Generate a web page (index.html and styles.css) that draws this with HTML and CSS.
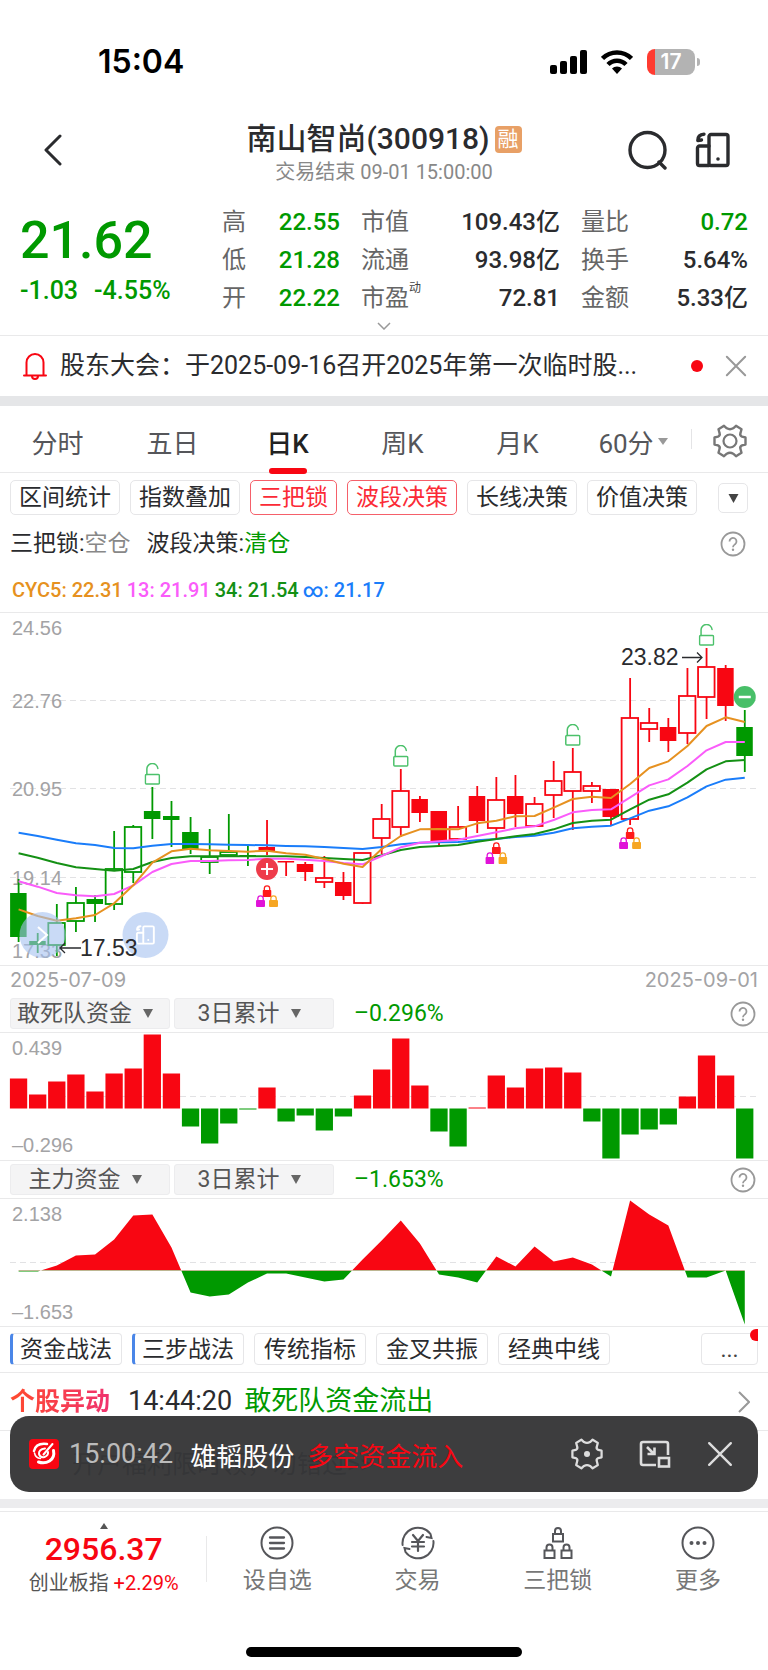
FILE: index.html
```
<!DOCTYPE html>
<html lang="zh-CN">
<head>
  <meta charset="UTF-8" />
  <meta name="viewport" content="width=device-width, initial-scale=1.0"/>
  <title>南山智尚(300918)</title>
  <link rel="stylesheet" href="styles.css">
</head>
<body>

<!-- shared icons -->
<svg class="defs" width="0" height="0" aria-hidden="true">
  <symbol id="i-help" viewBox="0 0 26 26">
    <circle cx="13" cy="13" r="11.5" fill="none" stroke="currentColor" stroke-width="1.8"/>
    <path d="M9.5 10.4a3.5 3.5 0 1 1 5.6 2.8c-1.3 1-2.1 1.5-2.1 3" fill="none" stroke="currentColor" stroke-width="1.8"/>
    <circle cx="13" cy="18.8" r="1.2" fill="currentColor"/>
  </symbol>
  <symbol id="i-close" viewBox="0 0 24 24">
    <path d="M2 2l20 20M22 2L2 22" fill="none" stroke="currentColor" stroke-width="2.2" stroke-linecap="round"/>
  </symbol>
  <symbol id="i-tri" viewBox="0 0 10 9">
    <path d="M0 0h10L5 9z" fill="currentColor"/>
  </symbol>
  <symbol id="i-gear" viewBox="0 0 34 34">
    <path d="M1.5 13.5L5 12.7Q7.5 11.5 6.5 9L5.5 5.2L11 1.8L13.8 4.3Q17 6.2 20.2 4.3L23 1.8L28.5 5.2L27.5 9Q26.5 11.5 29 12.7L32.5 13.5V20.5L29 21.3Q26.5 22.5 27.5 25L28.5 28.8L23 32.2L20.2 29.7Q17 27.8 13.8 29.7L11 32.2L5.5 28.8L6.5 25Q7.5 22.5 5 21.3L1.5 20.5z" fill="none" stroke="currentColor" stroke-width="2.4" stroke-linejoin="round"/>
  </symbol>
  <symbol id="i-phone" viewBox="0 0 36 36">
    <g fill="none" stroke="currentColor" stroke-width="3.4" stroke-linejoin="round" stroke-linecap="round">
      <rect x="14" y="2.5" width="19" height="31" rx="2"/>
      <path d="M14 14H4.5a2 2 0 0 0-2 2v15.500a2 2 0 0 0 2 2H14"/>
      <path d="M9 2.200Q2.800 2.500 2.800 8.500L6.500 8"/>
    </g>
    <circle cx="23" cy="27" r="1.800" fill="currentColor"/>
  </symbol>
  <symbol id="i-unlock" viewBox="0 0 16 22">
    <g fill="none" stroke="#4cc16b" stroke-width="1.5">
      <rect x="1" y="11.500" width="14" height="9.500" rx="1"/>
      <path d="M2.500 11.500V6.500a5.500 5.500 0 0 1 11-1" stroke-linecap="round"/>
    </g>
  </symbol>
  <symbol id="i-lock" viewBox="0 0 9 12">
    <path d="M1.800 6V3.500a2.700 2.700 0 0 1 5.400 0V6" fill="none" stroke="currentColor" stroke-width="1.300"/>
    <rect x="0" y="5" width="9" height="7" rx="1" fill="currentColor"/>
  </symbol>
</svg>

<div class="status-bar">
  <span class="clock">15:04</span>
  <div class="status-icons">
    <svg width="37" height="24" viewBox="0 0 37 24">
      <rect x="0" y="15" width="7" height="9" rx="2"/>
      <rect x="10" y="11" width="7" height="13" rx="2"/>
      <rect x="20" y="6" width="7" height="18" rx="2"/>
      <rect x="30" y="0" width="7" height="24" rx="2"/>
    </svg>
    <svg width="32" height="24" viewBox="0 0 32 24">
      <g fill="none" stroke="#000" stroke-width="4.500">
        <path d="M1.500 8.500a20.500 20.500 0 0 1 29 0"/>
        <path d="M7 14.500a12.500 12.500 0 0 1 18 0"/>
      </g>
      <path d="M16 24l-5-5.500a7 7 0 0 1 10 0z"/>
    </svg>
    <span class="battery">17</span>
  </div>
</div>

<header class="header">
  <button class="icon-btn back" aria-label="返回">
    <svg width="20" height="32" viewBox="0 0 20 32"><path d="M17 2L3 16l14 14" fill="none" stroke="currentColor" stroke-width="3" stroke-linecap="round" stroke-linejoin="round"/></svg>
  </button>
  <div class="heading">
    <h1>南山智尚(300918)<span class="margin-tag">融</span></h1>
    <p>交易结束 09-01 15:00:00</p>
  </div>
  <div class="header-actions">
    <button class="icon-btn" aria-label="搜索">
      <svg width="40" height="40" viewBox="0 0 40 40"><g fill="none" stroke="currentColor" stroke-width="3.400"><circle cx="19.500" cy="20" r="17.500"/><path d="M31 32l6 6" stroke-linecap="round"/></g></svg>
    </button>
    <button class="icon-btn" aria-label="小窗">
      <svg width="36" height="36"><use href="#i-phone"/></svg>
    </button>
  </div>
</header>

<section class="quote">
  <div class="quote-body">
    <div class="price">
      <strong>21.62</strong>
      <p><span>-1.03</span><span>-4.55%</span></p>
    </div>
    <dl class="stats">
      <div><dt>高</dt><dd class="down">22.55</dd></div>
      <div><dt>市值</dt><dd>109.43亿</dd></div>
      <div><dt>量比</dt><dd class="down">0.72</dd></div>
      <div><dt>低</dt><dd class="down">21.28</dd></div>
      <div><dt>流通</dt><dd>93.98亿</dd></div>
      <div><dt>换手</dt><dd>5.64%</dd></div>
      <div><dt>开</dt><dd class="down">22.22</dd></div>
      <div><dt>市盈<sup>动</sup></dt><dd>72.81</dd></div>
      <div><dt>金额</dt><dd>5.33亿</dd></div>
    </dl>
  </div>
  <button class="icon-btn expand" aria-label="展开">
    <svg width="14" height="8" viewBox="0 0 14 8"><path d="M1 1l6 6 6-6" fill="none" stroke="currentColor" stroke-width="1.500"/></svg>
  </button>
</section>

<div class="notice">
  <svg class="bell" width="24" height="28" viewBox="0 0 24 28">
    <g fill="none" stroke="currentColor" stroke-width="2" stroke-linecap="round">
      <path d="M3.500 23V10.500a8.500 8.500 0 0 1 17 0V23"/>
      <path d="M1 23.500h22M9 24a3 3 0 0 0 6 0"/>
    </g>
  </svg>
  <a href="#">股东大会：于2025-09-16召开2025年第一次临时股...</a>
  <i class="dot"></i>
  <button class="icon-btn" aria-label="关闭"><svg width="22" height="22"><use href="#i-close"/></svg></button>
</div>

<nav class="tabs">
  <button>分时</button>
  <button>五日</button>
  <button class="active">日K</button>
  <button>周K</button>
  <button>月K</button>
  <button>60分<svg width="10" height="7" viewBox="0 0 10 9" preserveAspectRatio="none"><path d="M0 0h10L5 9z" fill="#999"/></svg></button>
  <button class="settings" aria-label="设置">
    <svg width="34" height="34"><use href="#i-gear"/><circle cx="17" cy="17" r="6.500" fill="none" stroke="currentColor" stroke-width="2.200"/></svg>
  </button>
</nav>

<div class="chips">
  <button class="chip">区间统计</button>
  <button class="chip">指数叠加</button>
  <button class="chip on">三把锁</button>
  <button class="chip on">波段决策</button>
  <button class="chip">长线决策</button>
  <button class="chip">价值决策</button>
  <button class="chip more" aria-label="更多指标"><svg width="11" height="9"><use href="#i-tri"/></svg></button>
</div>

<div class="signal">
  <span>三把锁:<span class="muted">空仓</span></span>
  <span>波段决策:<span class="down">清仓</span></span>
  <button class="icon-btn help" aria-label="说明"><svg width="26" height="26"><use href="#i-help"/></svg></button>
</div>

<div class="legend">
  <span class="cyc5">CYC5: 22.31</span>
  <span class="cyc13">13: 21.91</span>
  <span class="cyc34">34: 21.54</span>
  <span class="cycinf">∞: 21.17</span>
</div>

<div class="chart kline">
  <svg id="kline" viewBox="0 1 768 352"></svg>
</div>
<div class="dates"><span>2025-07-09</span><span>2025-09-01</span></div>

<div class="indicator">
  <label class="picker"><select aria-label="指标"><option>敢死队资金</option></select><svg width="10" height="9"><use href="#i-tri"/></svg></label>
  <label class="picker"><select aria-label="周期"><option>3日累计</option></select><svg width="10" height="9"><use href="#i-tri"/></svg></label>
  <span class="down">–0.296%</span>
  <button class="icon-btn help" aria-label="说明"><svg width="26" height="26"><use href="#i-help"/></svg></button>
</div>
<div class="chart">
  <svg id="bars" viewBox="0 1 768 127"></svg>
</div>

<div class="indicator">
  <label class="picker"><select aria-label="指标"><option>主力资金</option></select><svg width="10" height="9"><use href="#i-tri"/></svg></label>
  <label class="picker"><select aria-label="周期"><option>3日累计</option></select><svg width="10" height="9"><use href="#i-tri"/></svg></label>
  <span class="down">–1.653%</span>
  <button class="icon-btn help" aria-label="说明"><svg width="26" height="26"><use href="#i-help"/></svg></button>
</div>
<div class="chart">
  <svg id="area" viewBox="0 0 768 127"></svg>
</div>

<div class="chips tactics">
  <button class="chip mark">资金战法</button>
  <button class="chip mark">三步战法</button>
  <button class="chip">传统指标</button>
  <button class="chip">金叉共振</button>
  <button class="chip">经典中线</button>
  <button class="chip more">...</button>
</div>

<div class="feed">
  <a class="event" href="#">
    <b>个股异动</b>
    <span class="time">14:44:20</span>
    <span class="down">敢死队资金流出</span>
    <svg width="12" height="22" viewBox="0 0 12 22"><path d="M1 1l10 10L1 21" fill="none" stroke="#999" stroke-width="2"/></svg>
  </a>
  <a class="promo" href="#">开户福利限时领，勿错过&gt;&gt;</a>

  <div class="toast">
    <svg class="logo" width="30" height="30" viewBox="0 0 30 30">
      <rect width="30" height="30" rx="4" fill="#f80612"/>
      <g fill="none" stroke="#fff" stroke-linecap="round">
        <path d="M18 5Q7 3.500 5 12" stroke-width="2.500"/>
        <path d="M5.500 14q1 5 6 5.500" stroke-width="1.500"/>
        <path d="M16 9.500q-6.500 1-6 5.500 1 4 5.500 3 4-1.500 3.500-5" stroke-width="2"/>
        <path d="M24.500 11.500q1.500 7-4 10.500-5 3-11 1" stroke-width="3"/>
        <path d="M23.500 5L14.500 15.500" stroke-width="2"/>
      </g>
    </svg>
    <span class="time">15:00:42</span>
    <span class="name">雄韬股份</span>
    <span class="up">多空资金流入</span>
    <div class="toast-actions">
      <button class="icon-btn" aria-label="设置"><svg width="32" height="32" viewBox="0 0 34 34"><use href="#i-gear"/><circle cx="17" cy="17" r="3.200" fill="currentColor"/></svg></button>
      <button class="icon-btn" aria-label="悬浮窗">
        <svg width="32" height="28" viewBox="0 0 32 28"><g fill="none" stroke="currentColor" stroke-width="2.600"><path d="M17 25H4a2 2 0 0 1-2-2V4a2 2 0 0 1 2-2h23a2 2 0 0 1 2 2v11"/><rect x="20" y="18" width="10" height="8.500"/><path d="M8 7l7 7M15.500 7.500V14H8.500"/></g></svg>
      </button>
      <button class="icon-btn" aria-label="关闭"><svg width="26" height="26"><use href="#i-close"/></svg></button>
    </div>
  </div>
</div>

<footer class="bottom-nav">
  <a class="index" href="#">
    <svg width="8" height="6" viewBox="0 0 8 6"><path d="M0 6h8L4 0z" fill="#555"/></svg>
    <strong>2956.37</strong>
    <span>创业板指 <span class="up">+2.29%</span></span>
  </a>
  <a href="#">
    <svg width="34" height="34" viewBox="0 0 34 34"><g fill="none" stroke="currentColor" stroke-width="2"><circle cx="17" cy="17" r="15.500"/><path d="M10 11.500h14M10 17h14M10 22.500h14" stroke-width="2.300" stroke-linecap="round"/></g></svg>
    设自选
  </a>
  <a href="#">
    <svg width="34" height="34" viewBox="0 0 34 34"><g fill="none" stroke="currentColor" stroke-width="2" stroke-linecap="round"><path d="M1.600 19A15.500 15.500 0 0 1 29.500 8M29.500 8l1 4-5-1"/><path d="M32.400 15A15.500 15.500 0 0 1 4.500 26M4.500 26l-1-4 5 1"/><path d="M12 9l5 6 5-6M17 15v10M11 16h12M11 20.500h12" stroke-width="2.200"/></g></svg>
    交易
  </a>
  <a href="#">
    <svg width="34" height="34" viewBox="0 0 34 34"><g fill="none" stroke="currentColor" stroke-width="2"><rect x="12" y="8" width="10" height="7.500"/><path d="M14 8V5q0-3 3-3t3 3v3"/><rect x="3.500" y="24.500" width="10" height="7.500"/><path d="M5.500 24.500v-3q0-3 3-3t3 3v3"/><rect x="20.500" y="24.500" width="10" height="7.500"/><path d="M22.500 24.500v-3q0-3 3-3t3 3v3"/></g></svg>
    三把锁
  </a>
  <a href="#">
    <svg width="34" height="34" viewBox="0 0 34 34"><circle cx="17" cy="17" r="15.500" fill="none" stroke="currentColor" stroke-width="2"/><g fill="currentColor"><circle cx="10.500" cy="17" r="2"/><circle cx="17" cy="17" r="2"/><circle cx="23.500" cy="17" r="2"/></g></svg>
    更多
  </a>
</footer>
<div class="home-indicator"></div>

<script src="charts.js"></script>
</body>
</html>
```
FILE: styles.css
```
* { box-sizing: border-box; }
body {
  margin: 0;
  font-family: Roboto, "Noto Sans CJK SC", sans-serif;
  background: #fff;
  color: #2a2b2e;
}
a { color: inherit; text-decoration: none; }
button { font: inherit; color: inherit; background: none; border: none; padding: 0; cursor: pointer; }
svg { display: block; flex: none; }
.defs { position: absolute; }
.up { color: #f80612; }
.down { color: #090; }
.muted { color: #888; }
.icon-btn { display: flex; flex: none; }

/* status bar */
.status-bar {
  display: flex;
  justify-content: space-between;
  align-items: center;
  padding: 42px 73px 24px 98px;
  line-height: 40px;
  color: #000;
}
.clock { font-family: Inter, sans-serif; font-weight: 600; font-size: 32px; }
.status-icons { display: flex; align-items: center; gap: 14px; }
.battery {
  width: 48px;
  height: 26px;
  border-radius: 8px;
  background: linear-gradient(to right, #ff3b30 8px, #b3b3b3 8px);
  color: #fff;
  font: 600 21px/26px Inter, sans-serif;
  text-align: center;
  position: relative;
}
.battery::after {
  content: "";
  position: absolute;
  right: -5px;
  top: 9px;
  width: 3px;
  height: 8px;
  border-radius: 0 3px 3px 0;
  background: #b3b3b3;
}

/* header */
.header {
  display: grid;
  grid-template-columns: 1fr auto 1fr;
  align-items: center;
  padding: 15px 37px 6px;
}
.header .icon-btn { padding-bottom: 5px; }
.back { padding-left: 6px; }
.heading { text-align: center; }
h1 {
  display: flex;
  align-items: center;
  gap: 5px;
  margin: 0 0 3px;
  font-size: 30px;
  line-height: 36px;
  font-weight: 500;
}
.margin-tag {
  width: 27px;
  border-radius: 4px;
  background: #e8a066;
  color: #fff;
  font-size: 21px;
  line-height: 27px;
  font-weight: 400;
  text-align: center;
}
.heading p { margin: 0; font-size: 20px; line-height: 24px; color: #888; }
.header-actions { display: flex; align-items: center; justify-content: flex-end; gap: 27px; }

/* quote */
.quote { padding-top: 13px; border-bottom: 1px solid #e9e9ea; }
.quote-body { display: flex; padding: 0 20px; }
.price { width: 202px; padding-top: 10px; color: #090; }
.price strong { display: block; font-size: 52px; line-height: 56px; font-weight: 500; }
.price p { display: flex; gap: 16px; margin: 7px 0 0; font-size: 25px; line-height: 30px; font-weight: 500; }
.stats {
  flex: 1;
  display: grid;
  grid-template-columns: 118fr 199fr 167fr;
  column-gap: 21px;
  margin: 0;
  font-size: 24px;
  line-height: 38px;
}
.stats div { display: flex; justify-content: space-between; height: 38px; }
.stats dt { color: #666; }
.stats dd { margin: 0; font-weight: 500; }
.stats sup { font-size: 12px; line-height: 12px; color: #444; vertical-align: 14px; }
.expand { width: 100%; height: 18px; justify-content: center; align-items: center; color: #999; }

/* notice */
.notice {
  display: flex;
  align-items: center;
  padding: 0 21px 0 23px;
  border-bottom: 10px solid #e5e6e8;
  font-size: 25px;
  line-height: 60px;
}
.notice a { margin: 0 auto 0 13px; white-space: nowrap; }
.notice .icon-btn { color: #999; }
.bell { color: #f80612; }
.dot { width: 12px; height: 12px; margin-right: 22px; border-radius: 50%; background: #f80612; }

/* period tabs */
.tabs {
  display: grid;
  grid-template-columns: repeat(5, 115fr) 116fr 77fr;
  border-bottom: 1px solid #e9e9ea;
  font-size: 26px;
  color: #55565a;
}
.tabs button { display: flex; justify-content: center; align-items: center; gap: 4px; height: 66px; padding-top: 4px; }
.tabs .active { color: #222; font-weight: 500; position: relative; }
.tabs .active::after {
  content: "";
  position: absolute;
  bottom: -2px;
  width: 38px;
  height: 6px;
  border-radius: 3px;
  background: #f80612;
}
.tabs .settings {
  background: linear-gradient(#e4e4e6, #e4e4e6) left / 1px 20px no-repeat;
  color: #777;
}

/* chips */
.chips { display: flex; gap: 10px; padding: 7px 20px 0 10px; }
.chip {
  padding: 1px 8px 0;
  border: 1px solid #e6e6e8;
  border-radius: 5px;
  font-size: 23px;
  line-height: 32px;
  white-space: nowrap;
}
.chip.on { border-color: #f5606a; color: #fb2a36; }
.chip.more {
  display: flex;
  justify-content: center;
  align-items: center;
  align-self: center;
  width: 30px;
  height: 30px;
  margin-left: auto;
  color: #444;
}

.signal {
  display: flex;
  align-items: center;
  gap: 16px;
  padding: 13px 22px 0 10px;
  font-size: 23px;
  line-height: 32px;
}
.help { margin-left: auto; color: #999; }

.legend {
  display: flex;
  gap: 4px;
  padding: 16px 12px 8px;
  font-size: 20px;
  line-height: 28px;
  font-weight: 500;
}
.cyc5 { color: #e69120; }
.cyc13 { color: #fa5cfa; }
.cyc34 { color: #149014; }
.cycinf { color: #1a7dfa; }

/* charts */
.chart { border-bottom: 1px solid #e9e9ea; }
.chart.kline { border-top: 1px solid #e9e9ea; }
.chart svg { width: 100%; height: auto; }
.chart text { font-family: "Liberation Sans", sans-serif; font-size: 20px; fill: #a3a3a5; }
.chart text.peak { font-size: 23px; fill: #2a2b2e; }
.grid { stroke: #e2e2e4; stroke-width: 1; stroke-dasharray: 6 4; }
.ma { fill: none; stroke-width: 2; stroke-linejoin: round; }

.dates {
  display: flex;
  justify-content: space-between;
  padding: 0 10px 1px;
  font-family: Inter, sans-serif;
  font-size: 20px;
  line-height: 28px;
  color: #a3a3a5;
}

.indicator {
  display: flex;
  align-items: center;
  gap: 4px;
  padding: 3px 12px 3px 10px;
  border-bottom: 1px solid #e9e9ea;
  font-size: 23px;
  line-height: 29px;
}
.picker {
  display: flex;
  justify-content: center;
  align-items: center;
  gap: 11px;
  width: 160px;
  height: 31px;
  padding-right: 10px;
  border: 1px solid #ececee;
  border-radius: 3px;
  background: #f4f4f5;
  color: #666;
}
.picker select {
  appearance: none;
  border: none;
  padding: 0;
  background: none;
  font: inherit;
  color: #555;
}
.indicator > span { margin-left: 16px; }

/* tactics row */
.tactics { padding: 6px 10px 7px; border-bottom: 1px solid #e9e9ea; }
.tactics .chip { padding: 1px 9px 0; line-height: 29px; border-radius: 4px; }
.tactics .mark { border-left: 3px solid #4a86e8; padding-left: 7px; }
.tactics .more { width: 57px; height: 32px; position: relative; }
.tactics .more::after {
  content: "";
  position: absolute;
  top: -5px;
  right: -1px;
  width: 8px;
  height: 12px;
  border-radius: 6px 0 0 6px;
  background: #f80612;
}

/* feed + toast */
.feed { position: relative; border-bottom: 9px solid #ececee; }
.event {
  display: flex;
  align-items: center;
  padding: 0 18px 0 10px;
  border-bottom: 1px solid #e9e9ea;
  font-size: 27px;
  line-height: 57px;
}
.event b {
  font-size: 25px;
  background: linear-gradient(to right, #ff4a2e, #f0326e);
  -webkit-background-clip: text;
  background-clip: text;
  color: transparent;
}
.event .time { margin: 0 12px 0 18px; }
.event svg { margin-left: auto; }
.promo { display: block; padding-left: 72px; font-size: 25px; line-height: 68px; color: #10203c; }
.toast {
  position: absolute;
  left: 10px;
  right: 10px;
  bottom: 7px;
  display: flex;
  align-items: center;
  height: 76px;
  padding: 0 25px 0 19px;
  border-radius: 19px;
  background: rgba(55, 55, 56, 0.97);
  font-size: 26px;
}
.toast .time { margin: 0 17px 0 10px; font-size: 27px; color: #bbb; }
.toast .name { margin-right: 13px; color: #fff; }
.toast-actions { display: flex; align-items: center; gap: 36px; margin-left: auto; color: #ddd; }

/* bottom nav */
.bottom-nav {
  display: grid;
  grid-template-columns: 207fr repeat(4, 140fr);
  margin-top: 3px;
  border-top: 1px solid #e9e9ea;
}
.bottom-nav a {
  display: flex;
  flex-direction: column;
  align-items: center;
  gap: 7px;
  padding-top: 14px;
  font-size: 23px;
  line-height: 28px;
  color: #777;
}
.bottom-nav a svg { color: #55565a; }
.bottom-nav .index {
  gap: 2px;
  padding-top: 11px;
  background: linear-gradient(#e9e9ea, #e9e9ea) right 24px / 1px 46px no-repeat;
  font-size: 20px;
  color: #555;
}
.index strong { font-size: 32px; line-height: 36px; font-weight: 500; color: #f80612; }
.home-indicator {
  width: 276px;
  height: 10px;
  margin: 50px auto 15px;
  border-radius: 5px;
  background: #000;
}
```
FILE: charts.js
```
const RED = '#f80612';
const GREEN = '#090';
const STEP = 19.11;
const cx = i => 18.6 + i * STEP;

// [filled, high, bodyTop, bodyBottom, low, color]
const candles = [
  [1, 267, 281, 325, 330, 'g'], [1, 321, 329, 333, 341, 'g'], [0, 292, 311, 333, 344, 'g'],
  [0, 275, 291, 309, 320, 'g'], [1, 283, 287, 292, 310, 'g'], [0, 219, 257, 292, 298, 'g'],
  [0, 213, 215, 260, 271, 'g'], [1, 175, 199, 207, 227, 'g'], [1, 189, 204, 208, 235, 'g'],
  [1, 205, 220, 237, 242, 'g'], [0, 217, 245, 250, 262, 'g'], [0, 202, 240, 243, 243, 'g'],
  [1, 234, 243, 244, 254, 'g'], [1, 208, 235, 239, 243, 'r'], [1, 249, 249, 250, 264, 'r'],
  [1, 250, 252, 260, 269, 'r'], [0, 244, 266, 270, 276, 'r'], [1, 260, 270, 284, 288, 'r'],
  [0, 241, 241, 291, 292, 'r'], [0, 192, 207, 226, 242, 'r'], [0, 157, 179, 215, 225, 'r'],
  [1, 184, 187, 201, 210, 'r'], [1, 199, 199, 229, 234, 'r'], [0, 194, 215, 227, 227, 'r'],
  [1, 174, 184, 209, 221, 'r'], [0, 165, 188, 216, 227, 'r'], [1, 163, 184, 202, 215, 'r'],
  [0, 185, 192, 214, 214, 'r'], [0, 149, 169, 183, 206, 'r'], [0, 136, 160, 179, 218, 'r'],
  [0, 170, 174, 179, 191, 'r'], [1, 177, 177, 205, 214, 'r'], [0, 66, 106, 207, 213, 'r'],
  [0, 96, 111, 117, 130, 'r'], [1, 106, 115, 129, 140, 'r'], [0, 56, 84, 121, 132, 'r'],
  [0, 36, 55, 85, 107, 'r'], [1, 53, 56, 94, 109, 'r'], [1, 98, 115, 144, 160, 'g']
];

// average lines, sampled on a grid three times finer than the plot
const lines = {
  '#1a7dfa': [698,708,719,730,735,744,745,737,732,732,733,734,735,736,738,739,741,744,747,741,733,728,727,726,721,717,711,707,698,685,680,677,655,632,619,592,559,539,533],
  '#149014': [760,773,789,802,807,812,807,786,774,769,769,769,769,769,769,771,774,777,780,766,750,741,738,735,725,717,709,702,688,669,662,659,628,599,583,548,508,484,480],
  '#fa5cfa': [844,860,879,886,889,882,856,816,792,783,783,781,780,776,776,779,783,789,793,768,742,728,724,719,708,697,685,679,660,637,630,628,592,556,538,498,451,426,426],
  '#e69120': [928,948,962,955,945,910,856,788,754,746,751,753,755,752,760,764,777,791,801,747,708,688,687,688,670,662,649,648,623,597,590,594,552,504,484,438,378,352,366]
};

const flow = [30,14,27,34,17,35,40,74,35,-18,-35,-15,-1,21,-13,-7,-22,-8,13,39,70,23,-23,-38,1,33,21,40,41,36,-13,-50,-26,-21,-16,12,53,33,-50];
const main = [-1,-1,5,15,16,31,55,56,23,-22,-26,-24,-12,-3,-3,-7,-11,-9,11,30,50,27,-4,-7,-12,14,4,24,9,13,6,-6,70,56,45,-7,-7,0,-54];

const grid = y => `<line class="grid" x1="10" x2="758" y1="${y}" y2="${y}"/>`;
const label = (x, y, t) => `<text x="${x}" y="${y + 7}">${t}</text>`;

function drawKline() {
  let s = grid(88.5) + grid(176.5) + grid(265.5);
  s += label(12, 16, '24.56') + label(12, 89, '22.76') + label(12, 177, '20.95') + label(12, 266, '19.14') + label(12, 339, '17.33');

  candles.forEach(([filled, hi, top, bot, lo, c], i) => {
    const color = c === 'r' ? RED : GREEN;
    const x = cx(i);
    s += `<path d="M${x} ${hi}V${top}M${x} ${bot}V${lo}" stroke="${color}" stroke-width="1.8"/>`;
    if (filled) {
      s += `<rect x="${x - 8.5}" y="${top}" width="16.5" height="${Math.max(bot - top, 1.5)}" fill="${color}"/>`;
    } else {
      s += `<rect x="${x - 8.5}" y="${top}" width="16.5" height="${bot - top}" fill="none" stroke="${color}" stroke-width="1.8"/>`;
    }
  });

  for (const color in lines) {
    const pts = lines[color].map((v, i) => `${cx(i)},${v / 3 - 12}`).join(' ');
    s += `<polyline class="ma" stroke="${color}" points="${pts}"/>`;
  }

  [[7, 151], [20, 133], [29, 112], [36, 12]].forEach(([i, y]) => {
    s += `<use href="#i-unlock" x="${cx(i) - 8}" y="${y}" width="16" height="22"/>`;
  });
  [[13, 273], [25, 230], [32, 215]].forEach(([i, y]) => {
    s += `<use href="#i-lock" x="${cx(i) - 4.5}" y="${y}" width="9" height="12" color="#ff1a1a"/>`;
    s += `<use href="#i-lock" x="${cx(i) - 11}" y="${y + 10}" width="9" height="12" color="#e012d8"/>`;
    s += `<use href="#i-lock" x="${cx(i) + 2}" y="${y + 10}" width="9" height="12" color="#f6a623"/>`;
  });

  // buy / sell points
  s += `<circle cx="${cx(13)}" cy="257" r="11" fill="#ee3b4a"/><path d="M${cx(13) - 6} 257h12M${cx(13)} 251v12" stroke="#fff" stroke-width="2"/>`;
  s += `<circle cx="${cx(38)}" cy="85" r="11" fill="#48bf68"/><path d="M${cx(38) - 6} 85h12" stroke="#fff" stroke-width="2.5"/>`;

  // floating shortcuts
  s += `<circle cx="42.5" cy="323" r="23" fill="#a5c2f0" opacity=".6"/><path d="M38 315l9 8-9 8" fill="none" stroke="#fff" stroke-width="2"/>`;
  s += `<circle cx="145.5" cy="323" r="23" fill="#a5c2f0" opacity=".6"/><use href="#i-phone" x="135" y="313" width="21" height="20" color="#fff"/>`;

  // low / high
  s += `<path d="M81 336H60M65 331l-5 5 5 5M682 45.500h20M697 40.500l5 5-5 5" fill="none" stroke="#2a2b2e" stroke-width="1.3"/>`;
  s += `<text class="peak" x="80" y="344">17.53</text><text class="peak" x="621" y="53">23.82</text>`;
  document.getElementById('kline').innerHTML = s;
}

function drawBars() {
  let s = grid(64.5);
  flow.forEach((v, i) => {
    s += `<rect x="${cx(i) - 8.7}" y="${v > 0 ? 76.5 - v : 76.5}" width="17.3" height="${Math.abs(v)}" fill="${v > 0 ? RED : GREEN}"/>`;
  });
  s += label(12, 16, '0.439') + label(12, 113, '–0.296');
  document.getElementById('bars').innerHTML = s;
}

function drawArea() {
  const pts = main.map((v, i) => `${cx(i)},${71.5 - v}`).join(' ');
  const poly = `${cx(0)},71.5 ${pts} ${cx(38)},71.5`;
  let s = '<clipPath id="above"><rect width="768" height="71.5"/></clipPath>';
  s += '<clipPath id="below"><rect y="71.5" width="768" height="56"/></clipPath>';
  s += grid(63.5);
  s += `<polygon points="${poly}" fill="${RED}" clip-path="url(#above)"/>`;
  s += `<polygon points="${poly}" fill="${GREEN}" clip-path="url(#below)"/>`;
  s += label(12, 15, '2.138') + label(12, 113, '–1.653');
  document.getElementById('area').innerHTML = s;
}

drawKline();
drawBars();
drawArea();
```
